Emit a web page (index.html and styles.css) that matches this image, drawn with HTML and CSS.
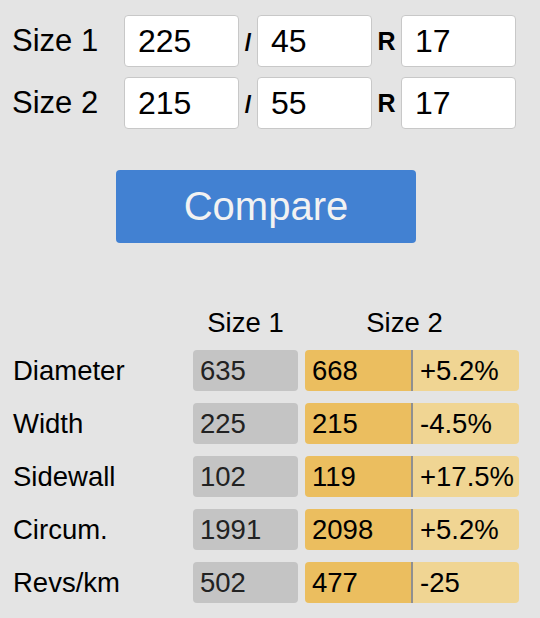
FILE: index.html
```html
<!DOCTYPE html>
<html lang="en">
<head>
    <meta charset="UTF-8">
    <meta name="viewport" content="width=device-width, initial-scale=1.0">
    <title>Tyre Size Compare</title>
    <link rel="stylesheet" href="styles.css">
</head>
<body>
    <div class="app">
        <form class="size-form">
            <div class="size-row">
                <label class="size-label" for="w1">Size 1</label>
                <input class="tyre-input" type="text" id="w1" value="225">
                <span class="sep">/</span>
                <input class="tyre-input" type="text" id="p1" value="45">
                <span class="sep rim">R</span>
                <input class="tyre-input" type="text" id="r1" value="17">
            </div>
            <div class="size-row">
                <label class="size-label" for="w2">Size 2</label>
                <input class="tyre-input" type="text" id="w2" value="215">
                <span class="sep">/</span>
                <input class="tyre-input" type="text" id="p2" value="55">
                <span class="sep rim">R</span>
                <input class="tyre-input" type="text" id="r2" value="17">
            </div>
            <button type="button" class="compare-btn">Compare</button>
        </form>

        <div class="results">
            <div></div>
            <div class="col-head">Size 1</div>
            <div class="col-head head-2">Size 2</div>

            <div class="row-label">Diameter</div>
            <div class="cell base">635</div>
            <div class="pair"><span class="cell new">668</span><span class="cell diff">+5.2%</span></div>

            <div class="row-label">Width</div>
            <div class="cell base">225</div>
            <div class="pair"><span class="cell new">215</span><span class="cell diff">-4.5%</span></div>

            <div class="row-label">Sidewall</div>
            <div class="cell base">102</div>
            <div class="pair"><span class="cell new">119</span><span class="cell diff">+17.5%</span></div>

            <div class="row-label">Circum.</div>
            <div class="cell base">1991</div>
            <div class="pair"><span class="cell new">2098</span><span class="cell diff">+5.2%</span></div>

            <div class="row-label">Revs/km</div>
            <div class="cell base">502</div>
            <div class="pair"><span class="cell new">477</span><span class="cell diff">-25</span></div>
        </div>
    </div>
</body>
</html>
```

FILE: styles.css
```css
body {
    margin: 0;
    font-family: "Liberation Sans", Arial, sans-serif;
    background-color: #e4e4e4;
    color: #000;
}
.app {
    padding: 15px 20px 0 12px;
}
.size-form {
    display: flex;
    flex-direction: column;
}
.size-row {
    display: flex;
    align-items: center;
    margin-bottom: 10px;
}
.size-label {
    width: 112px;
    font-size: 31px;
}
.tyre-input {
    width: 115px;
    height: 52px;
    box-sizing: border-box;
    padding: 0 13px;
    border: 1px solid #c8c8c8;
    border-radius: 4px;
    background-color: white;
    font-family: inherit;
    font-size: 32px;
    color: #000;
}
.sep {
    width: 18px;
    text-align: center;
    font-size: 24px;
    font-weight: bold;
    padding-top: 3px;
}
.rim {
    width: 29px;
    font-size: 25px;
    padding-top: 0;
}
.compare-btn {
    align-self: center;
    width: 300px;
    height: 73px;
    margin-top: 31px;
    border: none;
    border-radius: 4px;
    background-color: #4281d2;
    color: #f2f2f2;
    font-family: inherit;
    font-size: 40px;
    cursor: pointer;
}
.results {
    display: grid;
    grid-template-columns: 174px 105px 214px;
    grid-template-rows: 30px;
    grid-auto-rows: 41px;
    column-gap: 7px;
    row-gap: 12px;
    margin-top: 65px;
    font-size: 27.5px;
}
.col-head {
    text-align: center;
    line-height: 30px;
}
.head-2 {
    padding-right: 15px;
}
.row-label {
    line-height: 41px;
    padding-left: 1px;
}
.cell {
    line-height: 41px;
    padding-left: 7px;
}
.base {
    background-color: #c4c4c4;
    border-radius: 4px;
    color: #222;
}
.pair {
    display: flex;
}
.pair .cell {
    flex: 1;
}
.new {
    background-color: #ebbe5f;
    border-radius: 4px 0 0 4px;
}
.diff {
    background-color: #f0d593;
    border-left: 2px solid #909090;
    border-radius: 0 4px 4px 0;
}
```
